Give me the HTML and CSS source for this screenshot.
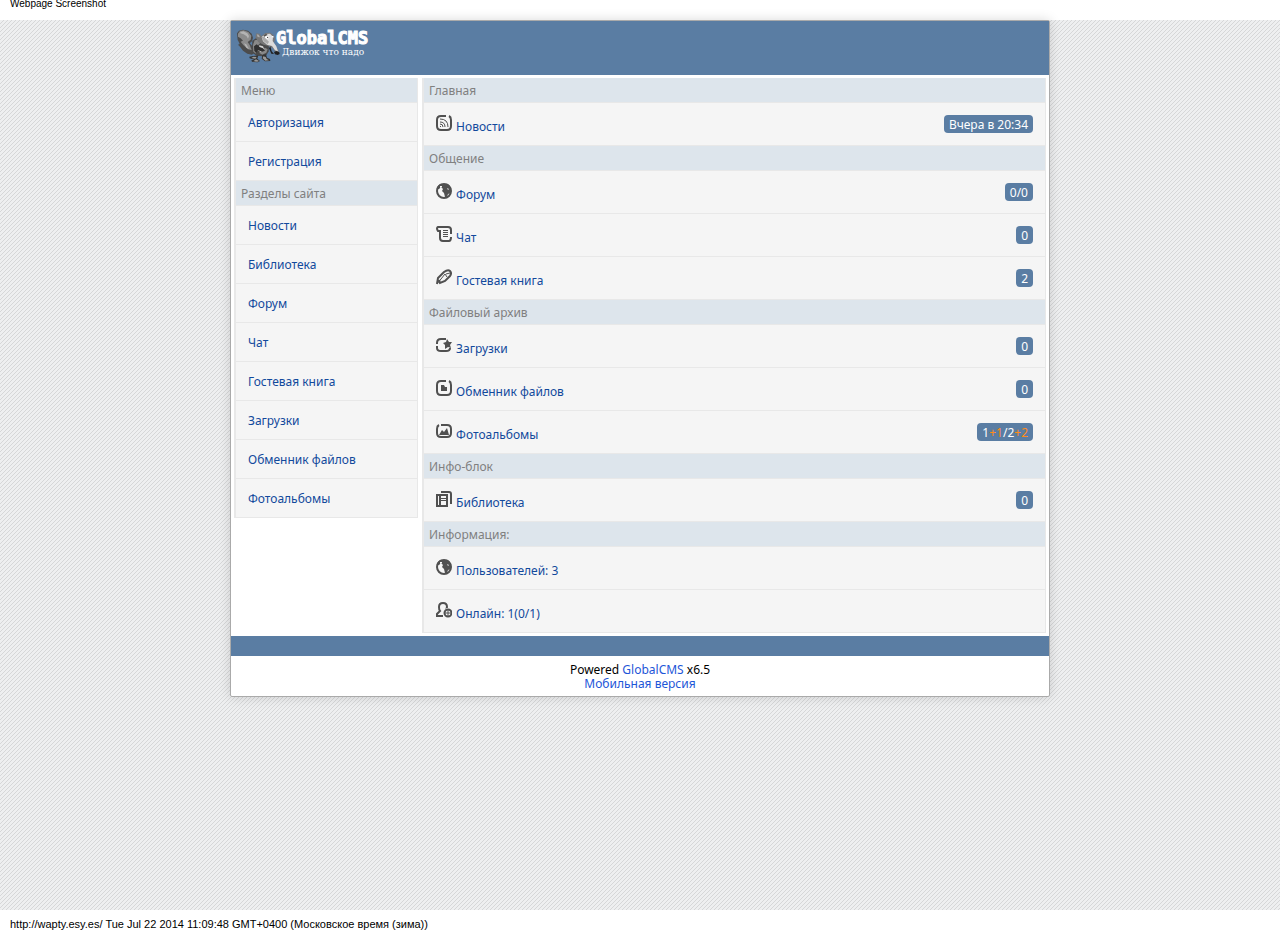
FILE: index.html
```html
<!DOCTYPE html>
<html lang="ru">
<head>
    <meta charset="UTF-8">
    <meta name="viewport" content="width=device-width, initial-scale=1.0">
    <title>GlobalCMS</title>
    <link rel="stylesheet" href="styles.css">
</head>
<body>
    <svg class="sprite" aria-hidden="true">
        <symbol id="globe" viewBox="0 0 16 16">
            <circle cx="8" cy="8" r="7"/>
            <path class="solid" d="M1 4l3-3h8l3 4v5l-3 1-1 3H9l-1-4-2-2 1-2-2-2-2 2H1z"/>
            <path class="water" d="M4 3h2v1l-2 1zM11 5l2 1-1 1z"/>
        </symbol>
    </svg>

    <div class="caption">Webpage Screenshot</div>

    <div class="page">
        <div class="wrapper">
            <header class="header">
                <a href="#" class="logo">
                    <svg class="squirrel" viewBox="34 42 132 102" aria-hidden="true">
                        <path fill="#4c4c4c" d="M37 55l6-8 12-3 15 3 11 9 4 12-3 11-7 6 8 8 4 10 5 8-10 8-14-3-13-9-9-12-6-6 5-2-3-7-3-5z"/>
                        <path fill="#8c8c8c" d="M40 56l6-8 11-2 14 5 9 11-2 12-9 7 6 9 6 15-11-2-14-13-8-10 7-3-7-7-8-5z"/>
                        <path fill="#b4b4b4" d="M47 51l9-2 12 6 5 8-3 8-4-7-9-6-10-3zM58 85l7 3 8 14-8-4z"/>
                        <path fill="#4a4a4a" d="M83 77l12-8 15 2 15 9 8 15-1 14-6 10-12 5-18-2-12-8-2-17z"/>
                        <path fill="#898989" d="M90 76l9-2 8 10-7 7-8 14 2 11-8-6-1-20zM108 104l13-6 8 5-4 10-12 6-9-5z"/>
                        <path fill="#d6d6d6" d="M104 91l11 3 4 9-10 8-8-4z"/>
                        <path fill="#303030" d="M88 94l8-6 9 8 10 4 6 7-9 3-13-5-4 8-6-5z"/>
                        <path fill="#777" d="M92 66l3-11 10 1 5 8 12-10 15-1 10 8 4 11-4 12 13 20 3 9-9 1-9-14-15-8-14-3-15-8-5-8z"/>
                        <path fill="#dcdcdc" d="M111 66l11-9 14-1 9 9-1 13 11 16 5 15-9-3-9-13-15-4-12-10z"/>
                        <path fill="#aaa" d="M111 67l9-3 5 9 8 7-4 8-12-9zM96 58l6 1 4 8-7-1z"/>
                        <path fill="#555" d="M116 61l8-5 5 3-9 6z"/>
                        <ellipse cx="127" cy="67" rx="6" ry="4" fill="#fff"/>
                        <circle cx="129" cy="67" r="2" fill="#222"/>
                        <circle cx="144" cy="66" r="3" fill="#fff"/>
                        <circle cx="145" cy="67" r="1" fill="#222"/>
                        <path fill="#202020" d="M148 111l7-3 9 4 1 5-6 3-8-2zM137 94l4 15 7 8-8-1-7-16z"/>
                        <path fill="#333" d="M85 123l16-2-3 10 8 7-7 4-17-2-2-4 9-2-14-4-1-5zM113 120l11-2 3 10 9 4 1 6-16 1-10-8z"/>
                        <path fill="#999" d="M86 125l10 1-4 5-12-2zM94 133l9 5-5 2-12-1zM116 124l7 2 3 6 7 4-11 1-8-7z"/>
                    </svg>
                    <span class="logo-text">
                        <span class="logo-name">GlobalCMS</span>
                        <span class="logo-slogan">Движок что надо</span>
                    </span>
                </a>
            </header>

            <div class="columns">
                <nav class="sidebar">
                    <h2 class="title">Меню</h2>
                    <a href="#" class="menu-link">Авторизация</a>
                    <a href="#" class="menu-link">Регистрация</a>
                    <h2 class="title">Разделы сайта</h2>
                    <a href="#" class="menu-link">Новости</a>
                    <a href="#" class="menu-link">Библиотека</a>
                    <a href="#" class="menu-link">Форум</a>
                    <a href="#" class="menu-link">Чат</a>
                    <a href="#" class="menu-link">Гостевая книга</a>
                    <a href="#" class="menu-link">Загрузки</a>
                    <a href="#" class="menu-link">Обменник файлов</a>
                    <a href="#" class="menu-link">Фотоальбомы</a>
                </nav>

                <main class="content">
                    <h2 class="title">Главная</h2>
                    <a href="#" class="row">
                        <span class="label">
                            <svg class="icon" viewBox="0 0 16 16"><path d="M10 1H5Q1 1 1 5v6q0 4 4 4h6q4 0 4-4V5q0-3-2-4"/><path class="thin" d="M4 4q8 0 8 8M4 7q5 0 5 5M4 9q3 0 3 3M4 11l1 1"/></svg>
                            Новости
                        </span>
                        <span class="count">Вчера в 20:34</span>
                    </a>

                    <h2 class="title">Общение</h2>
                    <a href="#" class="row">
                        <span class="label"><svg class="icon"><use href="#globe"/></svg> Форум</span>
                        <span class="count">0/0</span>
                    </a>
                    <a href="#" class="row">
                        <span class="label">
                            <svg class="icon" viewBox="0 0 16 16"><path d="M15 8V4q0-3-3-3H2Q0 2 2 5h2v7q0 3 3 3h6q2 0 2-4"/><path class="thin" d="M7 4.500h5M7 6.500h5M7 8.500h5M7 10.500h5"/></svg>
                            Чат
                        </span>
                        <span class="count">0</span>
                    </a>
                    <a href="#" class="row">
                        <span class="label">
                            <svg class="icon" viewBox="0 0 16 16"><path d="M1 15l1-6 6-6q4-3 6-1t0 5l-5 5-5 2-1-3"/><path class="thin" d="M1 15l8-10M9 5l2 3M10 5l4-1"/></svg>
                            Гостевая книга
                        </span>
                        <span class="count">2</span>
                    </a>

                    <h2 class="title">Файловый архив</h2>
                    <a href="#" class="row">
                        <span class="label">
                            <svg class="icon" viewBox="0 0 16 16"><path d="M1 7V6q0-4 4-4h5M1 9v2q0 3 4 3h5q4 0 4-3"/><path class="solid" d="M11 2l2 3h3l-2 3 1 3-3-1-3 2V8L7 6l3-1z"/></svg>
                            Загрузки
                        </span>
                        <span class="count">0</span>
                    </a>
                    <a href="#" class="row">
                        <span class="label">
                            <svg class="icon" viewBox="0 0 16 16"><path d="M10 1H5Q1 1 1 5v6q0 4 4 4h6q4 0 4-4V5q0-3-2-4"/><path class="solid" d="M5 5h3l1 2h2v4H5z"/></svg>
                            Обменник файлов
                        </span>
                        <span class="count">0</span>
                    </a>
                    <a href="#" class="row">
                        <span class="label">
                            <svg class="icon" viewBox="0 0 16 16"><path d="M5 2h6q4 0 4 4v4q0 4-4 4H5q-4 0-4-4V6q0-3 2-4"/><path class="solid" d="M3 12l3-5 2 2 3-4 2 7z"/></svg>
                            Фотоальбомы
                        </span>
                        <span class="count">1<span class="new">+1</span>/2<span class="new">+2</span></span>
                    </a>

                    <h2 class="title">Инфо-блок</h2>
                    <a href="#" class="row">
                        <span class="label">
                            <svg class="icon" viewBox="0 0 16 16"><path d="M4 4H1v11h2M4 4h7v11H4zM5 1h8q2 0 2 2v10"/><path class="thin" d="M5 7.500h5M5 9.500h5"/></svg>
                            Библиотека
                        </span>
                        <span class="count">0</span>
                    </a>

                    <h2 class="title">Информация:</h2>
                    <a href="#" class="row">
                        <span class="label"><svg class="icon"><use href="#globe"/></svg> Пользователей: 3</span>
                    </a>
                    <a href="#" class="row">
                        <span class="label">
                            <svg class="icon" viewBox="0 0 16 16"><path d="M7 14H1v-2l3-3q-1-1-1-4 0-4 4-4t4 4l-1 3"/><circle class="water" cx="12" cy="11" r="5"/><circle cx="12" cy="11" r="3.500"/><path class="thin" d="M12 8v6M9 11h6"/></svg>
                            Онлайн: 1(0/1)
                        </span>
                    </a>
                </main>
            </div>

            <div class="bar"></div>
            <footer class="footer">
                Powered <a href="#">GlobalCMS</a> x6.5<br>
                <a href="#">Мобильная версия</a>
            </footer>
        </div>
    </div>

    <div class="source">http://wapty.esy.es/ Tue Jul 22 2014 11:09:48 GMT+0400 (Московское время (зима))</div>
</body>
</html>
```

FILE: styles.css
```css
* {
    box-sizing: border-box;
}

body {
    margin: 0;
    min-height: 100vh;
    display: flex;
    flex-direction: column;
    background: #fff;
    color: #000;
    font-family: "Noto Sans", sans-serif;
    font-size: 12px;
    line-height: 14px;
}

a {
    color: #1e56d8;
    text-decoration: none;
}

.sprite {
    display: none;
}

/* Captions above and below the page */
.caption,
.source {
    height: 20px;
    padding: 0 10px;
    font-family: "Liberation Sans", Arial, sans-serif;
    font-size: 10px;
    line-height: 8px;
}

.source {
    font-size: 11px;
    line-height: 28px;
}

/* Striped background */
.page {
    flex: 1;
    background: linear-gradient(135deg, #eeeff0 45%, #d6d7d8 45% 55%, #eeeff0 55%);
    background-size: 4px 4px;
}

.wrapper {
    max-width: 820px;
    margin: 0 auto;
    background: #fff;
    border: 1px solid #aaa;
    border-radius: 2px;
    box-shadow: 0 0 12px rgba(0, 0, 0, 0.15);
}

/* Header */
.header {
    height: 54px;
    padding: 8px 5px;
    background: #5a7da3;
}

.logo {
    display: inline-flex;
    color: #fff;
}

.squirrel {
    width: 44px;
    height: 34px;
}

.logo-text {
    display: flex;
    flex-direction: column;
    margin-left: -4px;
}

.logo-name {
    font-family: "DejaVu Sans Mono", monospace;
    font-size: 17px;
    font-weight: bold;
    line-height: 18px;
    -webkit-text-stroke: 1px #fff;
}

.logo-slogan {
    padding-left: 6px;
    font-family: "DejaVu Serif", serif;
    font-size: 9px;
    line-height: 10px;
}

/* Columns */
.columns {
    display: flex;
    align-items: flex-start;
    gap: 4px;
    padding: 3px;
}

.sidebar,
.content {
    border: solid #e8e8e8;
    border-width: 0 1px 0 2px;
    background: #f5f5f5;
}

.sidebar {
    width: 184px;
}

.content {
    flex: 1;
}

.title {
    margin: 0;
    padding: 6px 5px 4px;
    border-bottom: 1px solid #e8e8e8;
    background: #dde5ec;
    color: #808080;
    font-size: 12px;
    font-weight: normal;
}

.menu-link,
.row {
    border-bottom: 1px solid #e8e8e8;
    color: #12499c;
}

.menu-link {
    display: block;
    padding: 13px 12px 11px;
}

.row {
    display: flex;
    justify-content: space-between;
    align-items: flex-start;
    padding: 12px 12px 11px;
}

.icon {
    width: 16px;
    height: 16px;
    margin-right: 1px;
    fill: none;
    stroke: #505050;
    stroke-width: 2;
}

.thin {
    stroke-width: 1;
}

.solid {
    fill: #505050;
    stroke: none;
}

.water {
    fill: #f5f5f5;
    stroke: none;
}

.count {
    padding: 3px 5px 1px;
    border-radius: 4px;
    background: #5a7da3;
    color: #fff;
}

.new {
    color: #ff8c1a;
}

/* Footer */
.bar {
    height: 20px;
    background: #5a7da3;
}

.footer {
    padding: 7px 6px 5px;
    text-align: center;
}
```
